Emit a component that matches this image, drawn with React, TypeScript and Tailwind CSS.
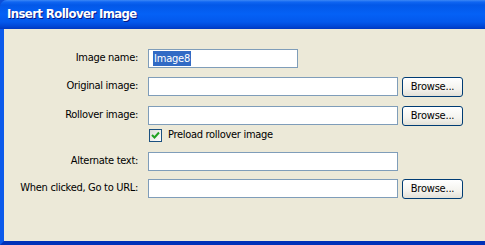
import React from 'react'

const FONT = "font-['Tahoma','DejaVu_Sans_Condensed','Liberation_Sans',sans-serif]"

function TextBox({ width, children }: { width: string; children?: React.ReactNode }) {
  return (
    <div className={`${width} h-[19px] border border-[#7F9DB9] bg-white flex items-center pl-[4px] shrink-0`}>
      {children}
    </div>
  )
}

function BrowseButton() {
  return (
    <button className="w-[61px] h-[20px] ml-[4px] rounded-[3px] border border-[#003C74] bg-[linear-gradient(#ffffff,#f4f3ee_60%,#e3e1d8)] text-[11px] tracking-[-0.2px] text-black leading-none flex items-center justify-center pb-[1px] shrink-0">
      Browse...
    </button>
  )
}

function Row({ label, mt, children }: { label: string; mt: string; children: React.ReactNode }) {
  return (
    <div className={`flex items-start ${mt}`}>
      <div className="w-[134px] h-[19px] flex items-center justify-end text-[11px] tracking-[-0.3px] text-black shrink-0">{label}</div>
      <div className="ml-[10px] flex items-start">{children}</div>
    </div>
  )
}

export default function App() {
  return (
    <div className={`w-[485px] h-[245px] overflow-hidden flex flex-col bg-[#0B4FD8] ${FONT}`}>
      {/* title bar */}
      <div className="h-[29px] shrink-0 rounded-tl-[7px] bg-[linear-gradient(#3d88f5_0px,#1066f2_2px,#0358e8_5px,#0461f6_14px,#0358ec_22px,#0048d8_26px,#0038c0_29px)] flex items-center pl-[7px] pb-[2px]">
        <span className="text-white font-bold text-[13px] tracking-[-0.6px] [text-shadow:1px_1px_0_#0a1883] font-['Trebuchet_MS','DejaVu_Sans_Condensed','DejaVu_Sans',sans-serif]">
          Insert Rollover Image
        </span>
      </div>

      {/* body */}
      <div className="flex-1 border-l-[4px] border-b-[4px] border-l-[#0B5AEB] border-b-[#0031B8] bg-[#ECE9D8] flex flex-col">
        <Row label="Image name:" mt="mt-[20px]">
          <TextBox width="w-[150px]">
            <span className="bg-[#316AC5] text-white text-[11px] tracking-[-0.2px] leading-[15px] px-[1px]">Image8</span>
          </TextBox>
        </Row>

        <Row label="Original image:" mt="mt-[9px]">
          <TextBox width="w-[250px]" />
          <BrowseButton />
        </Row>

        <Row label="Rollover image:" mt="mt-[9px]">
          <TextBox width="w-[250px]" />
          <BrowseButton />
        </Row>

        <div className="flex items-center mt-[3px] ml-[145px] h-[13px]">
          <div className="w-[13px] h-[13px] border border-[#1C5180] bg-[linear-gradient(135deg,#dcdcd7,#ffffff)] flex items-center justify-center">
            <svg width="9" height="9" viewBox="0 0 9 9">
              <path d="M1 4 L3.5 6.5 L8 1.5" stroke="#21A121" strokeWidth="2" fill="none" />
            </svg>
          </div>
          <span className="ml-[6px] text-[11px] tracking-[-0.3px] text-black">Preload rollover image</span>
        </div>

        <Row label="Alternate text:" mt="mt-[10px]">
          <TextBox width="w-[250px]" />
        </Row>

        <Row label="When clicked, Go to URL:" mt="mt-[8px]">
          <TextBox width="w-[250px]" />
          <BrowseButton />
        </Row>
      </div>
    </div>
  )
}
